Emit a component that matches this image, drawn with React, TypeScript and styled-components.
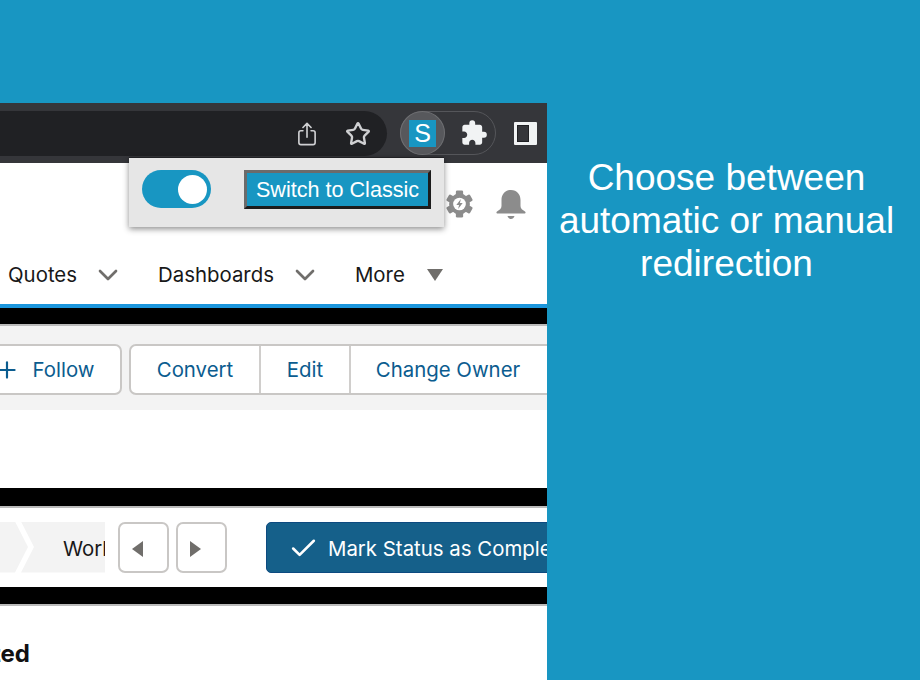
import styled, { createGlobalStyle } from "styled-components";
import { MdExtension } from "react-icons/md";
import { IoShareOutline } from "react-icons/io5";
import { Star, Check, Plus, ChevronDown } from "lucide-react";

const GlobalStyle = createGlobalStyle`
  html, body {
    margin: 0;
    padding: 0;
    height: 100%;
    background: #1896c2;
  }
  * { box-sizing: border-box; }
`;

const Page = styled.div`
  width: 920px;
  height: 680px;
  display: flex;
  overflow: hidden;
  background: #1896c2;
`;

const Shot = styled.div`
  position: relative;
  width: 547px;
  margin-top: 103px;
  flex-shrink: 0;
  display: flex;
  flex-direction: column;
  overflow: hidden;
  background: #fff;
  font-family: Inter, "Noto Sans", sans-serif;
`;

const Caption = styled.div`
  flex: 1;
  padding: 156px 14px 0 0;
  text-align: center;
  color: #fff;
  font-family: "Liberation Sans", Arial, sans-serif;
  font-size: 37px;
  line-height: 43px;
`;

const Toolbar = styled.div`
  height: 60px;
  flex-shrink: 0;
  background: #35363a;
  display: flex;
  align-items: flex-start;
  padding-top: 8px;
`;

const Omnibox = styled.div`
  width: 387px;
  height: 45px;
  flex-shrink: 0;
  background: #202124;
  border-radius: 0 23px 23px 0;
  display: flex;
  align-items: center;
  justify-content: flex-end;
  gap: 25px;
  padding-right: 16px;
  color: #cfd0d2;
`;

const ExtPill = styled.div`
  width: 96px;
  height: 44px;
  margin-left: 13px;
  border: 1px solid #55565a;
  border-radius: 22px;
  display: flex;
  align-items: center;
  justify-content: space-between;
  padding-right: 7px;
  color: #f1f3f4;
`;

const ExtActive = styled.div`
  width: 45px;
  height: 44px;
  margin: -1px 0 -1px -1px;
  border-radius: 50%;
  border: 1px solid #6e6f72;
  background: #57585c;
  display: flex;
  align-items: center;
  justify-content: center;
`;

const ExtLogo = styled.div`
  width: 27px;
  height: 27px;
  background: #1896c2;
  color: #fff;
  font-family: "Liberation Sans", Arial, sans-serif;
  font-size: 25px;
  line-height: 27px;
  text-align: center;
`;

const SidePanelIcon = styled.div`
  width: 23px;
  height: 23px;
  margin: 11px 0 0 18px;
  background: #f1f3f4;
  border: 2px solid #f1f3f4;
  border-radius: 1px;
  padding: 2px 7px 2px 2px;

  &::before {
    content: "";
    display: block;
    width: 100%;
    height: 100%;
    background: #35363a;
    box-shadow: 0 0 0 1px #202124;
  }
`;

const Popup = styled.div`
  position: absolute;
  left: 129px;
  top: 54px;
  width: 315px;
  height: 70px;
  background: #e6e6e6;
  border-top: 1px solid #202124;
  box-shadow: 0 2px 6px rgba(0, 0, 0, 0.45);
  display: flex;
  align-items: flex-start;
  padding: 12px 0 0 13px;
`;

const Toggle = styled.div`
  width: 69px;
  height: 38px;
  border-radius: 19px;
  background: #1896c2;
  display: flex;
  align-items: center;
  justify-content: flex-end;
  padding-right: 4px;

  &::after {
    content: "";
    width: 29px;
    height: 29px;
    border-radius: 50%;
    background: #fff;
  }
`;

const SwitchButton = styled.button`
  width: 187px;
  height: 39px;
  margin-left: 33px;
  padding: 0;
  background: #1896c2;
  color: #fff;
  font-family: "Liberation Sans", Arial, sans-serif;
  font-size: 21.6px;
  border-style: solid;
  border-width: 3px;
  border-color: #6b6b6b #1c1c1c #1c1c1c #6b6b6b;
`;

const Header = styled.div`
  height: 145px;
  flex-shrink: 0;
  border-bottom: 4px solid #1b96dd;
  display: flex;
  flex-direction: column;
`;

const HeaderIcons = styled.div`
  height: 100px;
  display: flex;
  align-items: flex-start;
  justify-content: flex-end;
  gap: 21px;
  padding: 26px 20px 0 0;
`;

const Nav = styled.div`
  display: flex;
  align-items: center;
  padding-left: 8px;
  height: 24px;
`;

const NavLabel = styled.span`
  font-size: 20.4px;
  line-height: 24px;
  color: #181818;
`;

const NavChevron = styled(ChevronDown)`
  width: 32px;
  height: 32px;
  flex-shrink: 0;
  margin: 0 34px 0 15px;
  color: #706e6b;
`;

const Caret = styled.span`
  width: 0;
  height: 0;
  margin-left: 22px;
  border-left: 8.5px solid transparent;
  border-right: 8.5px solid transparent;
  border-top: 12px solid #706e6b;
`;

const BlackBand = styled.div<{ $h: number }>`
  height: ${(p) => p.$h}px;
  flex-shrink: 0;
  background: #000;
  border-bottom: 2px solid #bbb;
`;

const ActionBar = styled.div`
  height: 84px;
  margin-right: -7px;
  flex-shrink: 0;
  background: #f3f3f3;
  display: flex;
  justify-content: flex-end;
  align-items: flex-start;
  gap: 7px;
  padding-top: 18px;
`;

const ButtonGroup = styled.div`
  height: 51px;
  flex-shrink: 0;
  display: flex;
  background: #fff;
  border: 2px solid #c9c7c5;
  border-radius: 7px;
`;

const ActionButton = styled.div<{ $w: number; $divider?: boolean; $clipped?: boolean }>`
  width: ${(p) => p.$w}px;
  display: flex;
  align-items: center;
  justify-content: center;
  gap: 13px;
  padding-right: ${(p) => (p.$clipped ? "7px" : "0")};
  color: #0b5c8f;
  font-size: 20.4px;
  border-left: ${(p) => (p.$divider ? "2px solid #d0cecc" : "none")};
`;

const Spacer = styled.div<{ $h: number }>`
  height: ${(p) => p.$h}px;
  flex-shrink: 0;
`;

const PathRow = styled.div`
  height: 79px;
  flex-shrink: 0;
  display: flex;
  align-items: center;
  padding-bottom: 1px;
`;

const PathFirst = styled.div`
  width: 28px;
  height: 51px;
  flex-shrink: 0;
  background: #f3f3f3;
  clip-path: polygon(0 0, 15px 0, 28px 50%, 15px 100%, 0 100%);
`;

const PathStep = styled.div`
  width: 84px;
  height: 51px;
  margin-left: -7px;
  flex-shrink: 0;
  background: #f3f3f3;
  clip-path: polygon(0 0, 100% 0, 100% 100%, 0 100%, 13px 50%);
  overflow: hidden;
  padding-left: 42px;
  font-size: 20.4px;
  line-height: 53px;
  color: #181818;
  white-space: nowrap;
`;

const ArrowButton = styled.div`
  width: 51px;
  height: 51px;
  flex-shrink: 0;
  border: 2px solid #c9c7c5;
  border-radius: 7px;
  background: #fff;
  display: flex;
  align-items: center;
  justify-content: center;
  padding: 3px 12px 0 0;
`;

const ArrowLeft = styled.span`
  width: 0;
  height: 0;
  border-top: 8.5px solid transparent;
  border-bottom: 8.5px solid transparent;
  border-right: 11px solid #706e6b;
`;

const ArrowRight = styled.span`
  width: 0;
  height: 0;
  border-top: 8.5px solid transparent;
  border-bottom: 8.5px solid transparent;
  border-left: 11px solid #706e6b;
`;

const ArrowGroup = styled.div`
  display: flex;
  gap: 7px;
  margin: 0 39px 0 13px;
`;

const MarkButton = styled.div`
  width: 320px;
  height: 51px;
  flex-shrink: 0;
  background: #15608a;
  border: 1px solid #0d4a80;
  border-radius: 5px;
  color: #fff;
  font-size: 20.4px;
  display: flex;
  align-items: center;
  gap: 9px;
  padding: 2px 0 0 21px;
  white-space: nowrap;
`;

const SectionTitle = styled.div`
  width: 30px;
  height: 30px;
  margin-top: 33px;
  overflow: hidden;
  display: flex;
  justify-content: flex-end;
  font-size: 24px;
  line-height: 30px;
  font-weight: 700;
  color: #111;
`;

const GearIcon = () => (
  <svg width="29" height="30" viewBox="0 0 32 32">
    <g fill="#8c8c8c">
      {[0, 60, 120, 180, 240, 300].map((a) => (
        <rect key={a} x="12" y="1" width="8" height="7" rx="1.5" transform={`rotate(${a} 16 16)`} />
      ))}
      <circle cx="16" cy="16" r="11.5" />
    </g>
    <circle cx="16" cy="16" r="7" fill="#fff" />
    <path d="M17.5 10.5 12.5 17h3l-1 4.500 5-6.500h-3z" fill="#8c8c8c" />
  </svg>
);

const BellIcon = () => (
  <svg width="32" height="32" viewBox="0 0 32 32">
    <path
      d="M16 1c-6 0-9.5 4.5-9.5 10v6c0 2.500-2 4-4.500 5.500-1 .6-.6 2 .6 2h26.800c1.200 0 1.600-1.400.6-2-2.500-1.500-4.500-3-4.500-5.500v-6C25.500 5.500 22 1 16 1z"
      fill="#8c8c8c"
    />
    <path d="M12.500 27h7c-.5 2-2 3-3.500 3s-3-1-3.500-3z" fill="#8c8c8c" />
  </svg>
);

export default function App() {
  return (
    <Page>
      <GlobalStyle />
      <Shot>
        <Toolbar>
          <Omnibox>
            <IoShareOutline size={26} />
            <Star size={26} strokeWidth={2.2} />
          </Omnibox>
          <ExtPill>
            <ExtActive>
              <ExtLogo>S</ExtLogo>
            </ExtActive>
            <MdExtension size={28} />
          </ExtPill>
          <SidePanelIcon />
        </Toolbar>
        <Popup>
          <Toggle />
          <SwitchButton>Switch to Classic</SwitchButton>
        </Popup>
        <Header>
          <HeaderIcons>
            <GearIcon />
            <BellIcon />
          </HeaderIcons>
          <Nav>
            <NavLabel>Quotes</NavLabel>
            <NavChevron />
            <NavLabel>Dashboards</NavLabel>
            <NavChevron />
            <NavLabel>More</NavLabel>
            <Caret />
          </Nav>
        </Header>
        <BlackBand $h={18} />
        <ActionBar>
          <ButtonGroup>
            <ActionButton $w={152}>
              <Plus size={26} color="#0b5c8f" />
              Follow
            </ActionButton>
          </ButtonGroup>
          <ButtonGroup>
            <ActionButton $w={128}>Convert</ActionButton>
            <ActionButton $w={90} $divider>Edit</ActionButton>
            <ActionButton $w={203} $divider $clipped>Change Owner</ActionButton>
          </ButtonGroup>
        </ActionBar>
        <Spacer $h={78} />
        <BlackBand $h={20} />
        <PathRow>
          <PathFirst />
          <PathStep>Working</PathStep>
          <ArrowGroup>
            <ArrowButton>
              <ArrowLeft />
            </ArrowButton>
            <ArrowButton>
              <ArrowRight />
            </ArrowButton>
          </ArrowGroup>
          <MarkButton>
            <Check size={31} strokeWidth={2} />
            Mark Status as Complete
          </MarkButton>
        </PathRow>
        <BlackBand $h={19} />
        <SectionTitle>Completed</SectionTitle>
      </Shot>
      <Caption>
        Choose between
        <br />
        automatic or manual
        <br />
        redirection
      </Caption>
    </Page>
  );
}
